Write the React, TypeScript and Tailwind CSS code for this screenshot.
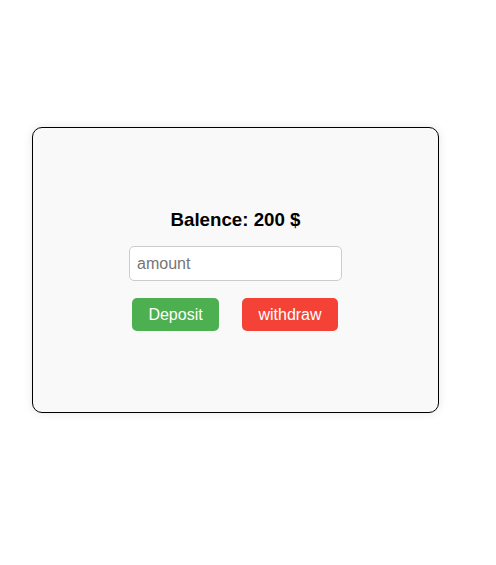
import { useState } from "react";

export default function App() {
  const [balance, setBalance] = useState(200);
  const [amount, setAmount] = useState("");

  const deposit = () => {
    const n = Number(amount);
    if (n > 0) setBalance(balance + n);
    setAmount("");
  };

  const withdraw = () => {
    const n = Number(amount);
    if (n > 0 && n <= balance) setBalance(balance - n);
    setAmount("");
  };

  return (
    <div className="min-h-[565px] bg-white pl-[32px] pt-[127px] font-['Liberation_Sans',Arial,sans-serif]">
      <div className="flex h-[286px] w-[407px] flex-col items-center justify-center rounded-[10px] border border-black bg-[#f9f9f9] shadow-[0_0_10px_rgba(0,0,0,0.1)]">
        <h3 className="h-[21px] text-[18.72px] font-bold leading-[21px] text-black">Balence: {balance} $</h3>
        <input
          type="number"
          value={amount}
          onChange={(e) => setAmount(e.target.value)}
          placeholder="amount"
          className="mt-[16px] h-[35px] w-[213px] rounded-[5px] border border-[#cccccc] bg-white pl-[7px] text-[16px] text-black outline-none placeholder:text-[#757575] [appearance:textfield] [&::-webkit-inner-spin-button]:appearance-none"
        />
        <div className="mt-[17px] flex gap-[23px] pr-[1px]">
          <button
            onClick={deposit}
            className="h-[33px] w-[87px] rounded-[5px] bg-[#4caf50] text-[16px] text-white"
          >
            Deposit
          </button>
          <button
            onClick={withdraw}
            className="h-[33px] w-[96px] rounded-[5px] bg-[#f44336] text-[16px] text-white"
          >
            withdraw
          </button>
        </div>
      </div>
    </div>
  );
}
